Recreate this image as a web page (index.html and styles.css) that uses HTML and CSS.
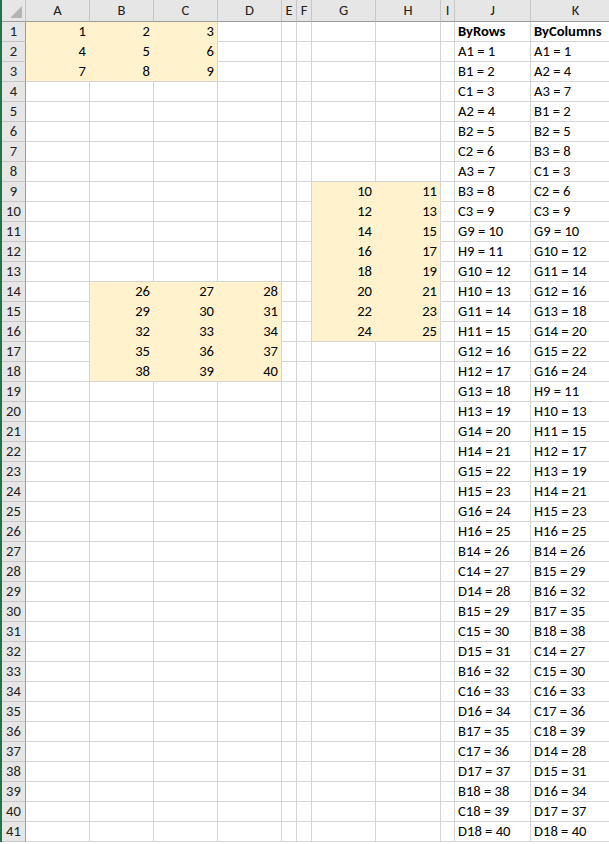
FILE: index.html
```html
<!DOCTYPE html>
<html>

<head>
    <meta charset="utf-8">
    <title>Sheet1</title>
    <link rel="stylesheet" href="styles.css">
</head>

<body>
    <div class="sheet" id="sheet"></div>
    <script>
        var cols = ["", "A", "B", "C", "D", "E", "F", "G", "H", "I", "J", "K"]
        var rows = 41
        var cells = {}

        /* die drei Blöcke */
        function block(c1, r1, c2, r2, start) {
            var n = start
            for (var r = r1; r <= r2; r++) {
                for (var c = c1; c <= c2; c++) {
                    cells[cols[c] + r] = n
                    n++
                }
            }
            return n
        }
        block(1, 1, 3, 3, 1)
        block(7, 9, 8, 16, 10)
        block(2, 14, 4, 18, 26)

        /* Listen nach Zeilen und nach Spalten */
        var byRows = []
        var byCols = []
        var blocks = [[1, 1, 3, 3], [7, 9, 8, 16], [2, 14, 4, 18]]
        blocks.forEach(function (b) {
            for (var r = b[1]; r <= b[3]; r++) {
                for (var c = b[0]; c <= b[2]; c++) {
                    byRows.push(cols[c] + r + " = " + cells[cols[c] + r])
                }
            }
            for (var c = b[0]; c <= b[2]; c++) {
                for (var r = b[1]; r <= b[3]; r++) {
                    byCols.push(cols[c] + r + " = " + cells[cols[c] + r])
                }
            }
        })

        var sheet = document.getElementById("sheet")
        var html = ""
        html += '<div class="corner"><span class="tri"></span></div>'
        for (var c = 1; c < cols.length; c++) {
            html += '<div class="colhead">' + cols[c] + '</div>'
        }
        for (var r = 1; r <= rows; r++) {
            html += '<div class="rowhead">' + r + '</div>'
            for (var c = 1; c < cols.length; c++) {
                var key = cols[c] + r
                var cls = "cell"
                var txt = ""
                if (cells[key] !== undefined) {
                    cls += " fill num"
                    txt = cells[key]
                    if (cells[cols[c + 1] + r] !== undefined) cls += " fill-r"
                    if (cells[cols[c] + (r + 1)] !== undefined) cls += " fill-b"
                }
                if (c == 10) txt = r == 1 ? "<b>ByRows</b>" : byRows[r - 2]
                if (c == 11) txt = r == 1 ? "<b>ByColumns</b>" : byCols[r - 2]
                html += '<div class="' + cls + '">' + txt + '</div>'
            }
        }
        sheet.innerHTML = html
    </script>
</body>

</html>
```

FILE: styles.css
```css
body {
    margin: 0;
    background-color: white;
    overflow: hidden;
}

.sheet {
    display: grid;
    grid-template-columns: 24px 64px 64px 64px 64px 15px 15px 64px 65px 14px 76px 90px;
    grid-template-rows: 22px;
    grid-auto-rows: 20px;
    border-left: 2px solid #217346;
    font-family: Carlito, Lato, "Liberation Sans", sans-serif;
    font-size: 14.6px;
    color: #000;
}

.corner {
    position: relative;
    background-color: #e6e6e6;
    border-right: 1px solid #c6c6c6;
    border-bottom: 1px solid #9b9b9b;
}

.tri {
    position: absolute;
    right: 3px;
    bottom: 3px;
    width: 0;
    height: 0;
    border-left: 12px solid transparent;
    border-bottom: 12px solid #b4b4b4;
}

.colhead {
    background-color: #e6e6e6;
    border-right: 1px solid #c6c6c6;
    border-bottom: 1px solid #9b9b9b;
    text-align: center;
    line-height: 21px;
    color: #222;
    overflow: hidden;
}

.rowhead {
    background-color: #e6e6e6;
    border-right: 1px solid #9b9b9b;
    border-bottom: 1px solid #c6c6c6;
    text-align: center;
    line-height: 19px;
    color: #222;
}

.cell {
    border-right: 1px solid #d4d4d4;
    border-bottom: 1px solid #d4d4d4;
    line-height: 19px;
    padding: 0 3px;
    white-space: nowrap;
    overflow: hidden;
}

.fill {
    background-color: #fff2cc;
}

.fill-r {
    border-right-color: #fff2cc;
}

.fill-b {
    border-bottom-color: #fff2cc;
}

.num {
    text-align: right;
}
```
